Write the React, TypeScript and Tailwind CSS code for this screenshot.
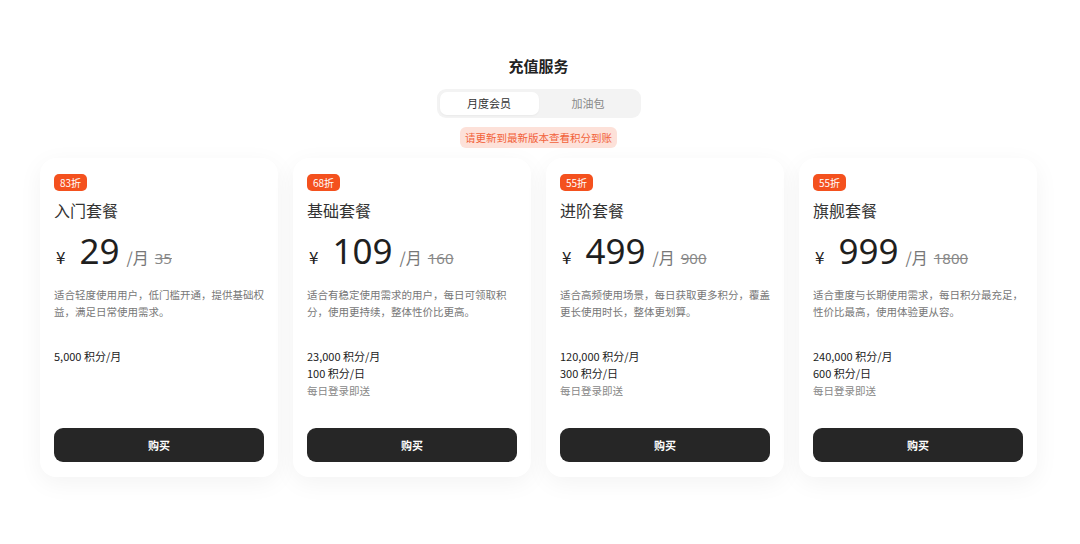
import React from 'react';

const font = "font-['Noto_Sans_CJK_SC','Noto_Sans',sans-serif]";

interface Plan {
  off: string;
  name: string;
  price: string;
  origin: string;
  desc: string;
  month: string;
  day?: string;
}

const plans: Plan[] = [
  {
    off: '83折',
    name: '入门套餐',
    price: '29',
    origin: '35',
    desc: '适合轻度使用用户，低门槛开通，提供基础权益，满足日常使用需求。',
    month: '5,000 积分/月',
  },
  {
    off: '68折',
    name: '基础套餐',
    price: '109',
    origin: '160',
    desc: '适合有稳定使用需求的用户，每日可领取积分，使用更持续，整体性价比更高。',
    month: '23,000 积分/月',
    day: '100 积分/日',
  },
  {
    off: '55折',
    name: '进阶套餐',
    price: '499',
    origin: '900',
    desc: '适合高频使用场景，每日获取更多积分，覆盖更长使用时长，整体更划算。',
    month: '120,000 积分/月',
    day: '300 积分/日',
  },
  {
    off: '55折',
    name: '旗舰套餐',
    price: '999',
    origin: '1800',
    desc: '适合重度与长期使用需求，每日积分最充足，性价比最高，使用体验更从容。',
    month: '240,000 积分/月',
    day: '600 积分/日',
  },
];

const PlanCard: React.FC<{ plan: Plan }> = ({ plan }) => {
  return (
    <div className="flex h-[319px] flex-col rounded-2xl bg-white px-[14px] pt-4 pb-[15px] shadow-[0_6px_24px_rgba(0,0,0,0.05)]">
      <span className="self-start rounded-[5px] bg-[#f4511e] px-[6px] text-[10px] leading-[17px] text-white">
        {plan.off}
      </span>
      <h3 className="mt-[8px] text-[16px] leading-[22px] text-[#333]">{plan.name}</h3>
      <div className="mt-[9px] flex items-baseline">
        <span className="ml-[2px] text-[17px] text-[#222]">¥</span>
        <span className="ml-[14px] font-['Noto_Sans',sans-serif] text-[35px] leading-[42px] text-[#1f1f1f]">
          {plan.price}
        </span>
        <span className="ml-[7px] text-[16px] text-[#777]">/月</span>
        <span className="ml-[6px] font-['Noto_Sans',sans-serif] text-[15px] text-[#888] line-through">
          {plan.origin}
        </span>
      </div>
      <p className="mt-[14px] text-[10.5px] leading-[17px] text-[#777]">{plan.desc}</p>
      <div className="mt-[28px] flex flex-col text-[11px] leading-[17px]">
        <span className="text-[#222]">{plan.month}</span>
        {plan.day && (
          <>
            <span className="text-[#222]">{plan.day}</span>
            <span className="text-[10.5px] text-[#888]">每日登录即送</span>
          </>
        )}
      </div>
      <button className="mt-auto h-[34px] w-full rounded-[9px] bg-[#262626] text-[11px] font-bold text-white">
        购买
      </button>
    </div>
  );
};

const App: React.FC = () => {
  return (
    <div className={`min-h-[544px] w-full bg-white ${font}`}>
      <div className="flex w-[1077px] flex-col items-center pt-[55px] pl-[40px] pr-[40px]">
        <h1 className="text-[15px] font-bold leading-[22px] text-[#222]">充值服务</h1>
        <div className="mt-[12px] flex h-[29px] w-[204px] items-center rounded-[9px] bg-[#f3f3f3] p-[3px]">
          <button className="h-full flex-1 rounded-[7px] bg-white text-[11px] text-[#333] shadow-[0_1px_2px_rgba(0,0,0,0.04)]">
            月度会员
          </button>
          <button className="h-full flex-1 text-[11px] text-[#888]">加油包</button>
        </div>
        <div className="mt-[9px] rounded-[6px] bg-[#fde1d9] px-[5px] text-[10.5px] leading-[21px] text-[#f2613a]">
          请更新到最新版本查看积分到账
        </div>
        <div className="mt-[10px] grid w-full grid-cols-4 gap-[15px]">
          {plans.map((p) => (
            <PlanCard key={p.name} plan={p} />
          ))}
        </div>
      </div>
    </div>
  );
};

export default App;
